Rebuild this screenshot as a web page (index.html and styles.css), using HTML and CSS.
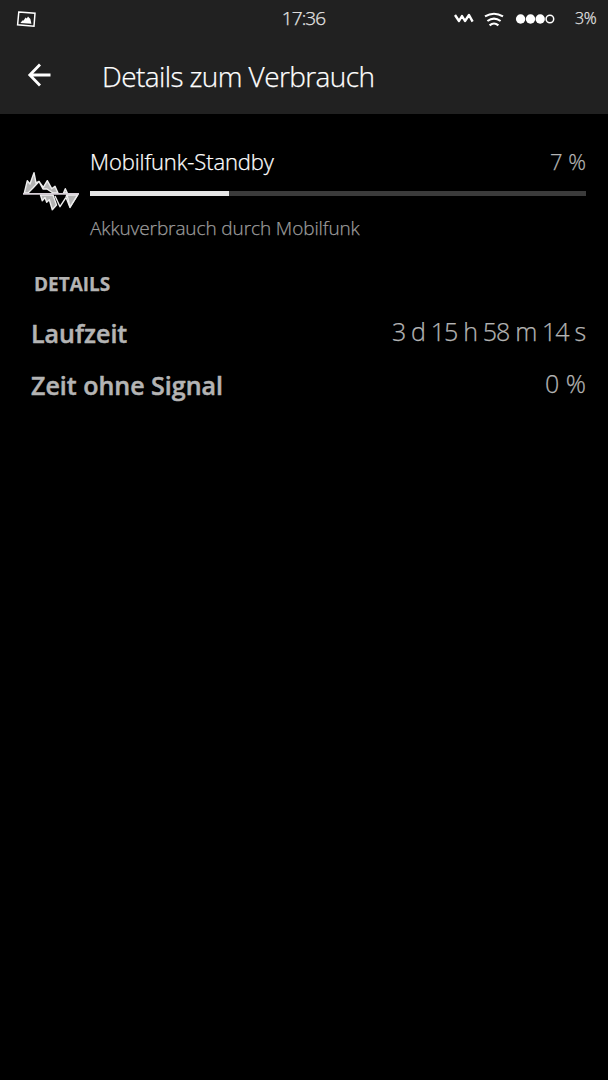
FILE: index.html
```html
<!DOCTYPE html>
<html lang="de">
<head>
  <meta charset="UTF-8" />
  <meta name="viewport" content="width=device-width, initial-scale=1.0"/>
  <title>Details zum Verbrauch</title>
  <link rel="stylesheet" href="styles.css">
</head>
<body>

  <header class="header">
    <div class="status-bar">
      <div class="status-left">
        <svg class="picture-icon" width="20" height="18" viewBox="0 0 20 18">
          <path d="M2.8 2L19 3.2L18 16.2L1.6 14.8Z" fill="none" stroke="#fff" stroke-width="1.5"/>
          <path d="M4.4 13L6.4 10.4L7.6 10.6L9.6 7.4L10.8 8.6L12 6.4L14.4 9L15.4 13.8Z" fill="#fff"/>
        </svg>
      </div>
      <span class="clock">17:36</span>
      <div class="status-right">
        <svg class="mobile-icon" width="20" height="12" viewBox="0 0 20 12">
          <path d="M1 2L5 8L8 3L11 8L15 2L18.6 8.6" fill="none" stroke="#fff" stroke-width="2.4" stroke-linejoin="round"/>
        </svg>
        <svg class="wifi-icon" width="20" height="16" viewBox="0 0 20 16" fill="none" stroke="#fff" stroke-width="2.1">
          <path d="M1 4.4Q10 -1 19 4.4"/>
          <path d="M3.4 9Q10 4.2 16.6 9"/>
          <path d="M5.6 13.4Q10 9.6 14.4 13.4"/>
        </svg>
        <svg class="signal-icon" width="40" height="12" viewBox="0 0 40 12" fill="#fff">
          <circle cx="5.6" cy="6" r="4.7"/>
          <circle cx="15.5" cy="6" r="4.7"/>
          <circle cx="25.2" cy="6" r="4.7"/>
          <circle cx="34.9" cy="6" r="3.8" fill="none" stroke="#fff" stroke-width="1.5"/>
        </svg>
        <span class="battery">3%</span>
      </div>
    </div>
    <div class="title-bar">
      <svg class="back-icon" width="24" height="24" viewBox="0 0 24 24">
        <path d="M13 1.5L2.8 12L13 22.5M2.8 12H23.5" fill="none" stroke="#fff" stroke-width="2.8"/>
      </svg>
      <h1>Details zum Verbrauch</h1>
    </div>
  </header>

  <main>
    <section class="usage">
      <svg class="usage-icon" width="58" height="42" viewBox="0 0 58 42" stroke="#eee" stroke-width="1.4" stroke-linejoin="round">
        <path d="M2.3 22L5.3 9.7L8 13L12 1.7L14 12L17 10.5L11 17L6 22Z" fill="#b4b4b4"/>
        <path d="M17 10.5L21.3 16.3L25.3 9.7L29.7 17.7L33 15.3L36 22H31L25 18L21 18Z" fill="#b4b4b4"/>
        <path d="M41.5 22L43.3 17.7L45.3 22Z" fill="#b4b4b4"/>
        <path d="M18.5 24L20.3 29.7L23 26.5L24.7 31.3L27.3 28.7L30.3 38.7L34.5 34L31 24Z" fill="#b4b4b4"/>
        <path d="M33 25L38 35.7L44 26.3L48 36.5L56 23.5H45L44 26.3" fill="none"/>
        <path d="M45 24H55.5L48 36Z" fill="#b4b4b4"/>
        <path d="M1 22.8H57" stroke="#d8d0d8" stroke-width="1.7"/>
      </svg>
      <div class="usage-info">
        <div class="usage-head">
          <h2>Mobilfunk-Standby</h2>
          <span class="percent">7 %</span>
        </div>
        <div class="progress"><div class="progress-value"></div></div>
        <p>Akkuverbrauch durch Mobilfunk</p>
      </div>
    </section>

    <h3>DETAILS</h3>
    <div class="row">
      <span class="label">Laufzeit</span>
      <span class="value runtime">3 d 15 h 58 m 14 s</span>
    </div>
    <div class="row">
      <span class="label">Zeit ohne Signal</span>
      <span class="value">0 %</span>
    </div>
  </main>

</body>
</html>
```
FILE: styles.css
```css
* {
  margin: 0;
  padding: 0;
  box-sizing: border-box;
}

body {
  background-color: #000;
  color: #b4b4b4;
  font-family: "Open Sans", "Noto Sans", sans-serif;
  font-weight: 300;
  white-space: nowrap;
  -webkit-text-stroke: 0.25px;
}

svg {
  display: block;
  flex-shrink: 0;
}

.header {
  height: 114px;
  background-color: #212121;
  color: #fff;
}

.status-bar {
  height: 37px;
  display: grid;
  grid-template-columns: 1fr auto 1fr;
  align-items: center;
  padding: 0 11px 0 16px;
}

.clock {
  margin: -2px 0 0 -6px;
  font-size: 19px;
  letter-spacing: -0.9px;
  color: #e6e6e6;
}

.status-right {
  display: flex;
  align-items: center;
  justify-content: flex-end;
}

.wifi-icon {
  margin: 3px 11px 0 10px;
}

.battery {
  width: 22px;
  margin: -2px 0 0 20px;
  font-size: 16px;
  letter-spacing: -0.4px;
  color: #e6e6e6;
}

.title-bar {
  height: 77px;
  display: flex;
  align-items: center;
  padding: 0 0 2px 27px;
}

.title-bar h1 {
  margin: 2px 0 0 51px;
  font-size: 28px;
  font-weight: 300;
  line-height: 38px;
  letter-spacing: -0.6px;
}

.usage {
  display: flex;
  padding: 31px 22px 0 22px;
}

.usage-icon {
  margin: 26px 10px 0 0;
}

.usage-info {
  flex: 1;
}

.usage-head {
  display: flex;
  justify-content: space-between;
  line-height: 32px;
}

.usage h2 {
  font-size: 22px;
  font-weight: 300;
  letter-spacing: -0.1px;
  color: #fff;
}

.percent {
  font-size: 22px;
}

.progress {
  height: 5px;
  margin-top: 14px;
  background-color: #3b3b3b;
}

.progress-value {
  width: 28%;
  height: 5px;
  background-color: #e6e6e6;
}

.usage p {
  margin-top: 18px;
  font-size: 19px;
  line-height: 28px;
  letter-spacing: -0.1px;
  color: #9c9c9c;
}

h3 {
  margin: 29px 0 0 34px;
  font-size: 19px;
  line-height: 26px;
}

.row {
  height: 52px;
  display: flex;
  justify-content: space-between;
  padding: 0 22px 0 31px;
  font-size: 25px;
  line-height: 34px;
}

h3 + .row {
  margin-top: 17px;
}

.label {
  font-weight: 600;
  padding-top: 2px;
  -webkit-text-stroke: 0.5px;
}

.runtime {
  padding-right: 1px;
  letter-spacing: -1.1px;
  word-spacing: 0.6px;
}
```
